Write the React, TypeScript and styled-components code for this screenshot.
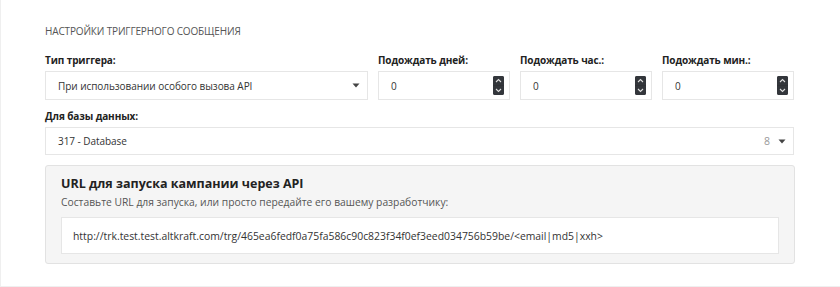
import React from 'react';
import styled, {createGlobalStyle} from "styled-components";

const GlobalStyle = createGlobalStyle`
  html, body {
    margin: 0;
    padding: 0;
    background: #ffffff;
  }
  body {
    font-family: "Open Sans", "Liberation Sans", sans-serif;
    color: #333;
  }
`

const Caret = () => (
  <svg width="8" height="5" viewBox="0 0 8 5">
    <path d="M0.5 0.5 L7.5 0.5 L4 4.5 Z" fill="#444"/>
  </svg>
)

const Spinner = () => (
  <SpinBox>
    <SpinHalf>
      <svg width="7" height="5" viewBox="0 0 7 5">
        <path d="M1 4 L3.5 1.5 L6 4" stroke="#ddd" strokeWidth="1.1" fill="none"/>
      </svg>
    </SpinHalf>
    <SpinHalf>
      <svg width="7" height="5" viewBox="0 0 7 5">
        <path d="M1 1 L3.5 3.5 L6 1" stroke="#ddd" strokeWidth="1.1" fill="none"/>
      </svg>
    </SpinHalf>
  </SpinBox>
)

const NumberField = ({label}: {label: string}) => (
  <Field width={132}>
    <Label>{label}</Label>
    <InputBox>
      <Value>0</Value>
      <Spinner/>
    </InputBox>
  </Field>
)

export default function App() {
  return (
    <>
      <GlobalStyle/>
      <Panel>
        <Heading>Настройки триггерного сообщения</Heading>
        <Row>
          <Field width={323}>
            <Label>Тип триггера:</Label>
            <InputBox>
              <Value>При использовании особого вызова API</Value>
              <Caret/>
            </InputBox>
          </Field>
          <NumberField label="Подождать дней:"/>
          <NumberField label="Подождать час.:"/>
          <NumberField label="Подождать мин.:"/>
        </Row>
        <Field width={749}>
          <Label>Для базы данных:</Label>
          <InputBox height={28}>
            <Value>317 - Database</Value>
            <SelectEnd>
              <Count>8</Count>
              <Caret/>
            </SelectEnd>
          </InputBox>
        </Field>
        <ApiBox>
          <ApiTitle>URL для запуска кампании через API</ApiTitle>
          <ApiHint>Составьте URL для запуска, или просто передайте его вашему разработчику:</ApiHint>
          <UrlBox>http://trk.test.test.altkraft.com/trg/465ea6fedf0a75fa586c90c823f34f0ef3eed034756b59be/&lt;email|md5|xxh&gt;</UrlBox>
        </ApiBox>
      </Panel>
    </>
  );
}

const Panel = styled.section`
  box-sizing: border-box;
  width: 860px;
  height: 287px;
  border: 1px solid #efefef;
  border-top: none;
  padding: 23px 0 0 44px;
  display: flex;
  flex-direction: column;
`

const Heading = styled.h3`
  margin: 0 0 14px;
  font-size: 10px;
  font-weight: 400;
  text-transform: uppercase;
  color: #555;
  line-height: 16px;
  letter-spacing: -0.15px;
`

const Row = styled.div`
  display: flex;
  gap: 10px;
  margin-bottom: 9px;
`

const Field = styled.div<{ width: number }>`
  width: ${p => p.width}px;
  display: flex;
  flex-direction: column;
`

const Label = styled.label`
  font-size: 10px;
  font-weight: 700;
  color: #222;
  line-height: 14px;
  margin-bottom: 4px;
  letter-spacing: -0.1px;
`

const InputBox = styled.div<{ height?: number }>`
  box-sizing: border-box;
  height: ${p => p.height ?? 29}px;
  border: 1px solid #e6e6e6;
  background: #fff;
  display: flex;
  align-items: center;
  justify-content: space-between;
  padding: 0 7px 0 12px;
`

const Value = styled.span`
  font-size: 10px;
  color: #333;
  letter-spacing: -0.05px;
`

const SelectEnd = styled.div`
  display: flex;
  align-items: center;
  gap: 8px;
`

const Count = styled.span`
  font-size: 10.5px;
  color: #999;
`

const SpinBox = styled.div`
  width: 11px;
  height: 19px;
  border-radius: 2px;
  background: #2f3135;
  display: flex;
  flex-direction: column;
  gap: 1px;
  overflow: hidden;
  margin-right: -2px;
`

const SpinHalf = styled.div`
  flex: 1;
  display: flex;
  align-items: center;
  justify-content: center;
  background: #33363b;
`

const ApiBox = styled.div`
  box-sizing: border-box;
  width: 750px;
  margin-top: 10px;
  background: #f5f5f5;
  border: 1px solid #e2e2e2;
  border-radius: 3px;
  padding: 9px 15px 9px 15px;
`

const ApiTitle = styled.h4`
  margin: 0;
  font-size: 12.5px;
  font-weight: 700;
  color: #222;
  line-height: 18px;
`

const ApiHint = styled.p`
  margin: 2px 0 8px;
  font-size: 10.3px;
  color: #555;
  line-height: 14px;
`

const UrlBox = styled.div`
  box-sizing: border-box;
  height: 37px;
  background: #fff;
  border: 1px solid #e6e6e6;
  display: flex;
  align-items: center;
  padding: 0 11px;
  font-size: 10.4px;
  color: #333;
`
